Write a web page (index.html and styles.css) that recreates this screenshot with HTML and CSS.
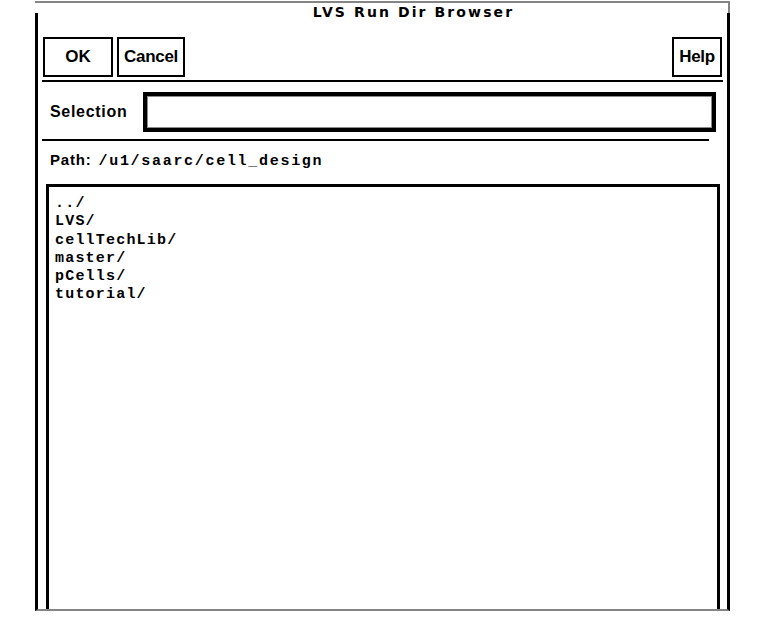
FILE: index.html
```html
<!DOCTYPE html>
<html>
<head>
<meta charset="utf-8">
<title>LVS Run Dir Browser</title>
<link rel="stylesheet" href="styles.css">
</head>
<body>
<div class="window">
  <div class="title">LVS Run Dir Browser</div>
  <div class="body">
    <div class="toolbar">
      <button class="btn btn-ok">OK</button>
      <button class="btn btn-cancel">Cancel</button>
      <button class="btn btn-help">Help</button>
    </div>
    <div class="rule rule-top"></div>
    <div class="selection-row">
      <span class="sel-label">Selection</span>
      <div class="sel-input"></div>
    </div>
    <div class="rule rule-mid"></div>
    <div class="path-row"><span class="path-label">Path:</span><span class="path-value">/u1/saarc/cell_design</span></div>
    <div class="list">
      <div class="item">../</div>
      <div class="item">LVS/</div>
      <div class="item">cellTechLib/</div>
      <div class="item">master/</div>
      <div class="item">pCells/</div>
      <div class="item">tutorial/</div>
    </div>
  </div>
</div>
</body>
</html>
```
FILE: styles.css
```css
html, body {
  margin: 0;
  padding: 0;
  background: #ffffff;
}

.window {
  margin: 1px 0 0 35px;
  width: 695px;
  border-top: 2px solid #858585;
}

.title {
  box-sizing: border-box;
  height: 10px;
  padding: 1px 0 0 64px;
  line-height: 16px;
  text-align: center;
  font-family: "DejaVu Sans", sans-serif;
  font-weight: bold;
  font-size: 14px;
  letter-spacing: 2.1px;
  color: #000;
  white-space: nowrap;
  border-right: 2px solid #858585;
}

.body {
  height: 596px;
  border-left: 3px solid #000;
  border-right: 3px solid #000;
  border-bottom: 2px solid #858585;
  display: flex;
  flex-direction: column;
  overflow: hidden;
}

.toolbar {
  display: flex;
  gap: 4px;
  padding: 24px 5px 0 5px;
}

.btn {
  box-sizing: border-box;
  height: 40px;
  border: 2px solid #000;
  background: #fff;
  padding: 0;
  margin: 0;
  font-family: "Liberation Sans", Arial, sans-serif;
  font-weight: bold;
  font-size: 17px;
  color: #000;
}

.btn-ok { width: 70px; }
.btn-cancel { width: 68px; letter-spacing: -0.3px; }
.btn-help { width: 50px; margin-left: auto; letter-spacing: -0.3px; }

.rule {
  height: 2px;
  background: #000;
}

.rule-top {
  margin: 3px 4px 0 4px;
}

.rule-mid {
  margin: 7px 18px 0 4px;
}

.selection-row {
  margin-top: 10px;
  display: grid;
  grid-template-columns: 81px 1fr;
  column-gap: 12px;
  align-items: center;
  padding: 0 11px 0 12px;
}

.sel-label {
  font-family: "Liberation Sans", Arial, sans-serif;
  font-weight: bold;
  font-size: 16px;
  letter-spacing: 0.7px;
  white-space: nowrap;
}

.sel-input {
  box-sizing: border-box;
  height: 40px;
  border: 4px solid #000;
  box-shadow: inset 0 0 0 1px #8a8a8a;
  background: #fff;
}

.path-row {
  margin-top: 10px;
  padding-left: 12px;
  line-height: 18px;
  white-space: nowrap;
}

.path-label {
  font-family: "Liberation Sans", Arial, sans-serif;
  font-weight: bold;
  font-size: 15px;
  letter-spacing: 0.8px;
  margin-right: 7px;
}

.path-value {
  font-family: "Liberation Mono", "Courier New", monospace;
  font-weight: bold;
  font-size: 15px;
  letter-spacing: 1.7px;
}

.list {
  flex: 1;
  margin: 13px 7px 0 8px;
  border: 3px solid #000;
  border-bottom: 0;
  padding: 8px 0 0 6px;
}

.item {
  font-family: "Liberation Mono", "Courier New", monospace;
  font-weight: bold;
  font-size: 15px;
  line-height: 18.3px;
  letter-spacing: 1.2px;
  color: #000;
  white-space: nowrap;
}
```
